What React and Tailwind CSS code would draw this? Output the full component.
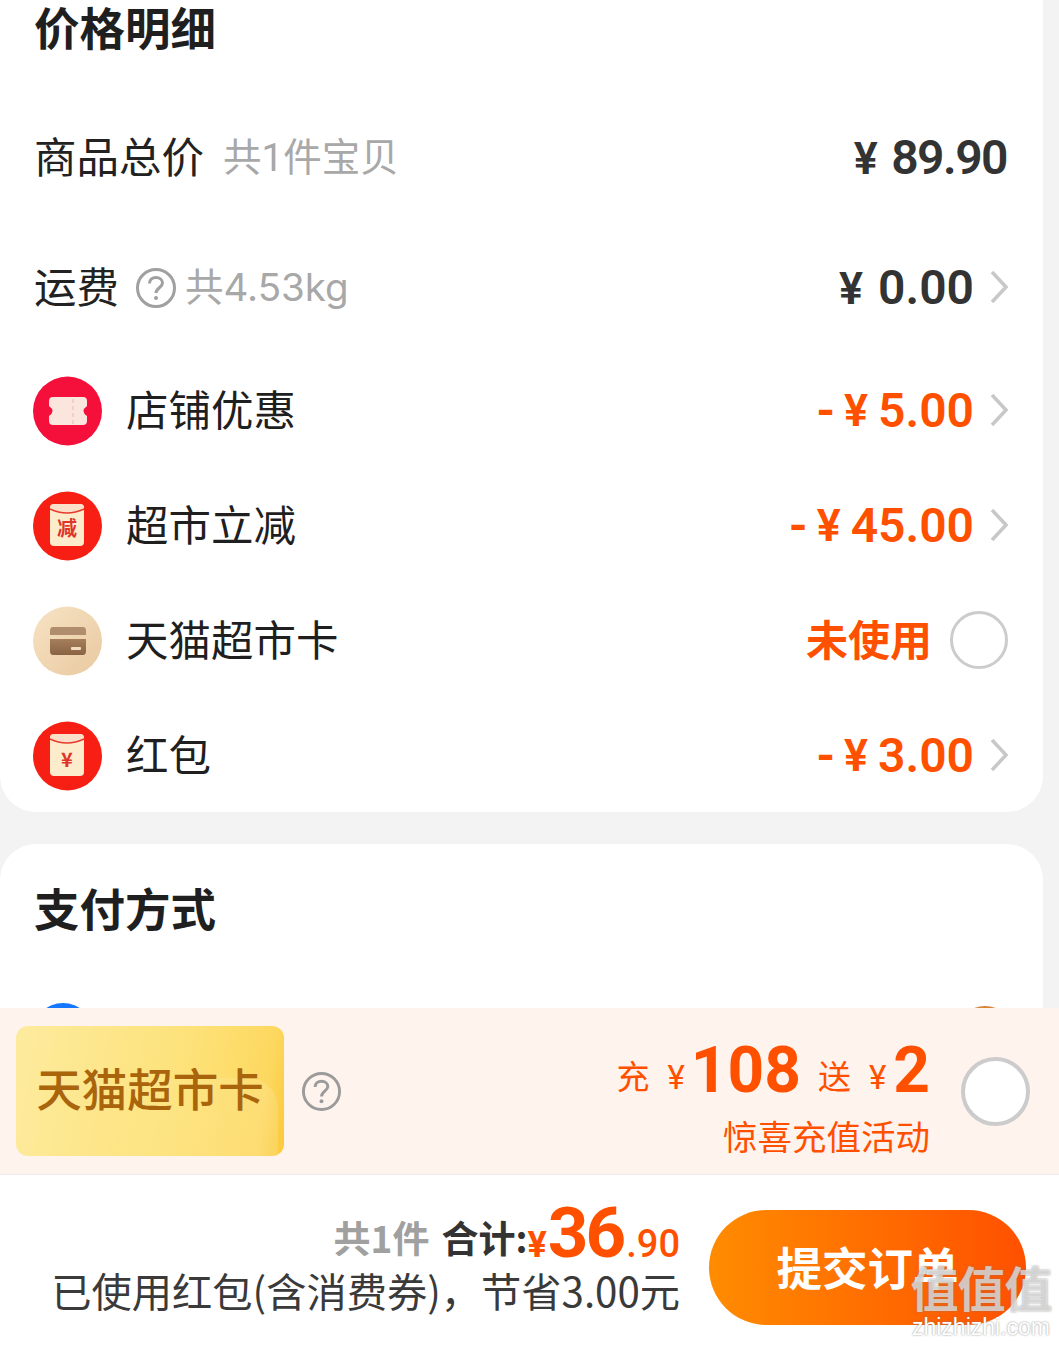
const CJK = '"Noto Sans CJK SC", sans-serif';
const NUM = 'Roboto, "Noto Sans CJK SC", sans-serif';
const INTER = 'Inter, "Noto Sans CJK SC", sans-serif';

function Chevron() {
  return (
    <svg width="18" height="34" viewBox="0 0 18 34" fill="none" className="ml-[16px] shrink-0">
      <path d="M2 2 L16 17 L2 32" stroke="#c8c8c8" strokeWidth="3.5" />
    </svg>
  );
}

function Help({ size = 42, color = "#a0a0a0" }) {
  return (
    <svg width={size} height={size} viewBox="0 0 42 42" fill="none" className="shrink-0">
      <circle cx="21" cy="21" r="18.5" stroke={color} strokeWidth="3" />
      <path d="M14.5 16.5 C14.5 12.5 17.5 10.5 21 10.5 C24.7 10.5 27.5 12.8 27.5 16 C27.5 20.5 21 21 21 26" stroke={color} strokeWidth="3" />
      <circle cx="21" cy="31" r="2" fill={color} />
    </svg>
  );
}

function Ticket() {
  return (
    <svg width="70" height="70" viewBox="0 0 70 70">
      <circle cx="34.5" cy="35" r="34.5" fill="#f4103a" />
      <path d="M20 21 H50 Q54 21 54 25 V30 Q47 35 54 40 V45 Q54 49 50 49 H20 Q16 49 16 45 V40 Q23 35 16 30 V25 Q16 21 20 21 Z" fill="#fbe6de" />
      <path d="M40 23 V48" stroke="#f5cfc6" strokeWidth="2" strokeDasharray="4 3" />
    </svg>
  );
}

function Packet({ label, small }) {
  return (
    <svg width="70" height="70" viewBox="0 0 70 70">
      <circle cx="34.5" cy="35" r="34.5" fill="#f71e14" />
      <rect x="17" y="13" width="34" height="42" rx="4" fill="#fdeccb" />
      <path d="M17 17 Q17 13 21 13 H47 Q51 13 51 17 V18 Q34 26 17 18 Z" fill="#fbdfc8" />
      <path d="M17 18 Q34 26 51 18" stroke="#e8392b" strokeWidth="1.5" fill="none" />
      <text x="34" y={small ? 46 : 45} textAnchor="middle" fontSize="20" fontWeight="700" fill="#e0342a" style={{ fontFamily: CJK }}>{label}</text>
    </svg>
  );
}

function Card() {
  return (
    <svg width="70" height="70" viewBox="0 0 70 70">
      <defs>
        <linearGradient id="cg" x1="0" y1="0" x2="1" y2="1">
          <stop offset="0" stopColor="#f7e3c4" />
          <stop offset="1" stopColor="#e9c9a0" />
        </linearGradient>
        <linearGradient id="cb" x1="0" y1="0" x2="0" y2="1">
          <stop offset="0" stopColor="#a57f5c" />
          <stop offset="1" stopColor="#8a6344" />
        </linearGradient>
      </defs>
      <circle cx="34.5" cy="35" r="34.5" fill="url(#cg)" />
      <path d="M50 21 Q53 21 53 25 V29 H17 V25 Q17 21 20 21 Z" fill="#b08e6d" />
      <path d="M17 33 H53 V45 Q53 49 50 49 H20 Q17 49 17 45 Z" fill="url(#cb)" />
      <rect x="38" y="41" width="10" height="3" rx="1" fill="#f3dcc0" />
    </svg>
  );
}

function Row({ icon, label, children }) {
  return (
    <div className="h-[115px] flex items-center pl-[33px] pr-[35px]">
      <span className="translate-y-[1px]">{icon}</span>
      <span className="ml-[23px] text-[42.5px] text-[#1f1f1f] -translate-y-[2px]" style={{ fontFamily: CJK }}>{label}</span>
      <div className="ml-auto flex items-center">{children}</div>
    </div>
  );
}

function Discount({ value }) {
  return (
    <span className="flex items-center text-[#ff5000] text-[48px] font-semibold leading-none translate-y-[1px]" style={{ fontFamily: NUM }}>
      <span className="mr-[9px] font-bold">-</span>
      <span className="mr-[10px] text-[45px]">¥</span>
      {value}
    </span>
  );
}

export default function App() {
  return (
    <div className="w-[1059px] h-[1346px] overflow-hidden flex flex-col bg-[#f3f3f3]" style={{ fontFamily: CJK }}>
      <section className="w-[1043px] shrink-0 bg-white rounded-b-[36px] h-[812px]">
        <h2 className="h-[56px] pl-[34px] flex items-center text-[45.5px] leading-none font-bold text-[#1f1f1f] -translate-y-[1px]">价格明细</h2>
        <div className="h-[130px] mt-[36px] flex items-center pl-[34px] pr-[36px]">
          <span className="text-[42.5px] text-[#222] -translate-y-[2px]">商品总价</span>
          <span className="ml-[19px] text-[38.5px] text-[#a8a8a8] translate-y-[1px]" style={{ fontFamily: NUM }}>共1件宝贝</span>
          <span className="ml-auto flex items-center text-[48px] tracking-[-1.5px] font-semibold text-[#333] leading-none translate-y-[1px]" style={{ fontFamily: NUM }}>
            <span className="mr-[15px] text-[45px]">¥</span>89.90
          </span>
        </div>
        <div className="h-[130px] flex items-center pl-[34px] pr-[35px]">
          <span className="text-[42.5px] text-[#222] -translate-y-[2px]">运费</span>
          <span className="ml-[16px] translate-y-[1px]"><Help /></span>
          <span className="ml-[8px] text-[38.5px] text-[#a8a8a8] translate-y-[1px]" style={{ fontFamily: INTER }}>共4.53kg</span>
          <span className="ml-auto flex items-center text-[48px] font-semibold text-[#333] leading-none translate-y-[1px]" style={{ fontFamily: NUM }}>
            <span className="mr-[15px] text-[45px]">¥</span>0.00
          </span>
          <Chevron />
        </div>
        <Row icon={<Ticket />} label="店铺优惠"><Discount value="5.00" /><Chevron /></Row>
        <Row icon={<Packet label="减" />} label="超市立减"><Discount value="45.00" /><Chevron /></Row>
        <Row icon={<Card />} label="天猫超市卡">
          <span className="text-[42px] font-bold text-[#ff5000] -translate-y-[2px]">未使用</span>
          <span className="ml-[18px] w-[58px] h-[58px] rounded-full border-[3px] border-[#cccccc] bg-white" />
        </Row>
        <Row icon={<Packet label="¥" small />} label="红包"><Discount value="3.00" /><Chevron /></Row>
      </section>

      <section className="w-[1043px] shrink-0 mt-[32px] h-[164px] bg-white rounded-t-[36px] overflow-hidden pl-[33px] pr-[35px]">
        <h2 className="h-[132px] pl-[1px] flex items-center text-[45.5px] leading-none font-bold text-[#1f1f1f] -translate-y-[2px]">支付方式</h2>
        <div className="flex items-start justify-between mt-[27px]">
          <span className="w-[60px] h-[60px] rounded-full bg-[#1677ff]" />
          <span className="w-[60px] h-[60px] mt-[3px] -mr-[7px] rounded-full bg-[#d9843a]" />
        </div>
      </section>

      <section className="h-[167px] shrink-0 bg-[#fff3ee] flex items-center pl-[16px] pr-[29px] border-b border-[#ececec]">
        <div className="relative w-[268px] h-[130px] rounded-[12px] overflow-hidden flex items-center justify-center bg-[linear-gradient(100deg,#fdeb9e_0%,#fde27a_60%,#fdd85f_90%,#fbc838_100%)]">
          <span className="absolute left-[80px] right-[6px] top-[52px] bottom-0 rounded-tr-[30px] bg-[linear-gradient(90deg,transparent,rgba(255,255,255,.14))]" />
          <span className="relative text-[45.5px] leading-none font-medium text-[#a9640c] -translate-y-[3px]">天猫超市卡</span>
        </div>
        <span className="ml-[17px]"><Help size={41} color="#9b9b9b" /></span>
        <div className="ml-auto mt-[14px] flex flex-col items-end text-[#ff5000]">
          <div className="flex items-baseline leading-none h-[72px]" style={{ fontFamily: NUM }}>
            <span className="text-[33px] mr-[18px] -translate-y-[3px]">充</span>
            <span className="text-[33px] mr-[6px] -translate-y-[3px]">¥</span>
            <span className="text-[64px] font-bold">108</span>
            <span className="text-[33px] ml-[17px] mr-[18px] -translate-y-[3px]">送</span>
            <span className="text-[33px] mr-[7px] -translate-y-[3px]">¥</span>
            <span className="text-[64px] font-bold">2</span>
          </div>
          <span className="text-[34.5px] leading-[46px] mt-[1px]">惊喜充值活动</span>
        </div>
        <span className="ml-[31px] w-[69px] h-[69px] rounded-full border-[4px] border-[#cccccc] bg-white" />
      </section>

      <footer className="relative flex-1 bg-white flex items-start pl-[46px]">
        <div className="w-[634px] pt-[18px] flex flex-col items-end">
          <div className="flex items-baseline h-[68px] leading-none">
            <span className="text-[37px] font-bold text-[#a0a0a0]">共1件</span>
            <span className="ml-[12px] text-[37px] font-bold text-[#333]">合计:</span>
            <span className="text-[36px] font-bold text-[#ff5000] translate-y-[4px]" style={{ fontFamily: NUM }}>¥</span>
            <span className="text-[71px] ml-[1px] font-bold text-[#ff5000] tracking-[-3px] translate-y-[4px]" style={{ fontFamily: NUM }}>36</span>
            <span className="text-[38px] ml-[3px] font-medium text-[#ff5000] translate-y-[4px]" style={{ fontFamily: NUM }}>.90</span>
          </div>
          <span className="text-[40.25px] leading-[50px] mt-[4px] text-[#3a3a3a] whitespace-nowrap">已使用红包(含消费券)，节省3.00元</span>
        </div>
        <button className="ml-[29px] mt-[35px] w-[317px] h-[115px] rounded-full bg-[linear-gradient(90deg,#ff8c00,#ff5000)] text-white text-[45.5px] leading-none font-bold">
          <span className="block -translate-y-[1px]">提交订单</span>
        </button>
        <div className="absolute left-[906px] top-[87px] w-[150px] text-center leading-none pointer-events-none">
          <div className="text-[48px] font-bold tracking-[-1px] text-white/60 [text-shadow:0_0_2px_rgba(120,120,120,.8)]">值值值</div>
          <div className="text-[23px] mt-[6px] text-white [text-shadow:0_0_2px_rgba(120,120,120,.9)]" style={{ fontFamily: '"Liberation Sans", sans-serif' }}>zhizhizhi.com</div>
        </div>
      </footer>
    </div>
  );
}
